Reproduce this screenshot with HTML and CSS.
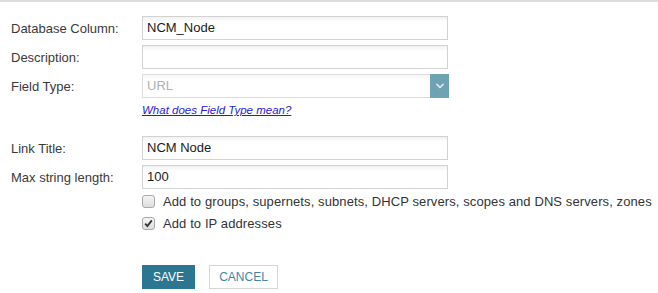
FILE: index.html
```html
<!DOCTYPE html>
<html>
<head>
<meta charset="utf-8">
<link rel="stylesheet" href="styles.css">
</head>
<body>
<div class="topbar"></div>
<form class="form">
  <div class="row">
    <label class="lbl">Database Column:</label>
    <div class="field"><div class="input">NCM_Node</div></div>
  </div>
  <div class="row">
    <label class="lbl">Description:</label>
    <div class="field"><div class="input"></div></div>
  </div>
  <div class="row">
    <label class="lbl">Field Type:</label>
    <div class="field">
      <div class="select">
        <span class="select-text">URL</span>
        <span class="select-btn">
          <svg width="10" height="6" viewBox="0 0 10 6"><path d="M1.5 1 L5 4.5 L8.5 1" fill="none" stroke="#e8f1f4" stroke-width="1.5"/></svg>
        </span>
      </div>
    </div>
  </div>
  <div class="row help-row">
    <span></span>
    <a class="help" href="#">What does Field Type mean?</a>
  </div>
  <div class="row row-gap">
    <label class="lbl">Link Title:</label>
    <div class="field"><div class="input">NCM Node</div></div>
  </div>
  <div class="row">
    <label class="lbl">Max string length:</label>
    <div class="field"><div class="input">100</div></div>
  </div>
  <div class="row check-row first-check">
    <span></span>
    <div class="check"><span class="box"></span><span class="check-text">Add to groups, supernets, subnets, DHCP servers, scopes and DNS servers, zones</span></div>
  </div>
  <div class="row check-row">
    <span></span>
    <div class="check"><span class="box checked"><svg width="11" height="11" viewBox="0 0 11 11"><path d="M2.2 5.6 L4.4 8 L8.8 2.4" fill="none" stroke="#333" stroke-width="1.8"/></svg></span><span class="check-text">Add to IP addresses</span></div>
  </div>
  <div class="row buttons">
    <span></span>
    <div class="btns"><span class="btn save">SAVE</span><span class="btn cancel">CANCEL</span></div>
  </div>
</form>
</body>
</html>
```
FILE: styles.css
```css
html, body {
  margin: 0;
  padding: 0;
  background: #fff;
}
body {
  font-family: "Liberation Sans", Arial, sans-serif;
  font-size: 13px;
  color: #333;
  width: 658px;
  height: 293px;
  overflow: hidden;
}
.topbar {
  height: 2px;
  background: #dcdcdc;
}
.form {
  padding: 14px 0 0 11px;
}
.row {
  display: grid;
  grid-template-columns: 131px 1fr;
  align-items: center;
  margin-bottom: 5px;
}
.lbl {
  color: #3a3a3a;
}
.input {
  box-sizing: border-box;
  width: 306px;
  height: 24px;
  border: 1px solid #d2d2d2;
  background: linear-gradient(#f1f1f1 0, #fff 5px);
  padding: 0 4px;
  line-height: 22px;
  color: #1a1a1a;
  font-size: 13px;
}
.select {
  box-sizing: border-box;
  width: 307px;
  height: 24px;
  border: 1px solid #dcdcdc;
  background: linear-gradient(#f6f6f6 0, #fff 5px);
  display: flex;
  align-items: stretch;
}
.select-text {
  flex: 1;
  padding-left: 4px;
  line-height: 22px;
  color: #b0b0b0;
}
.select-btn {
  width: 19px;
  margin: -1px -1px -1px 0;
  background: #6fa3b4;
  display: flex;
  align-items: center;
  justify-content: center;
}
.help-row {
  margin-bottom: 0;
  height: 14px;
}
.help {
  font-size: 11.5px;
  font-style: italic;
  color: #2a1ad8;
  text-decoration: underline;
  line-height: 14px;
}
.row-gap {
  margin-top: 19px;
}
.check-row {
  margin-bottom: 0;
  height: 22px;
}
.first-check {
  margin-top: -4px;
}
.check {
  display: flex;
  align-items: center;
}
.box {
  box-sizing: border-box;
  width: 13px;
  height: 13px;
  border: 1px solid #a9a9a9;
  border-radius: 3px;
  background: linear-gradient(#f4f4f4, #dedede);
  margin-right: 8px;
  display: flex;
  align-items: center;
  justify-content: center;
}
.box svg {
  display: block;
}
.check-text {
  color: #333;
  letter-spacing: 0.1px;
}
.buttons {
  margin-top: 31px;
}
.btns {
  display: flex;
  gap: 14px;
}
.btn {
  box-sizing: border-box;
  height: 24px;
  line-height: 22px;
  font-size: 12px;
  text-align: center;
  border: 1px solid transparent;
}
.save {
  width: 53px;
  background: #2b7792;
  border-color: #2b7792;
  color: #fff;
}
.cancel {
  width: 69px;
  background: #fff;
  border-color: #d6d6d6;
  color: #3f86a5;
}
```
